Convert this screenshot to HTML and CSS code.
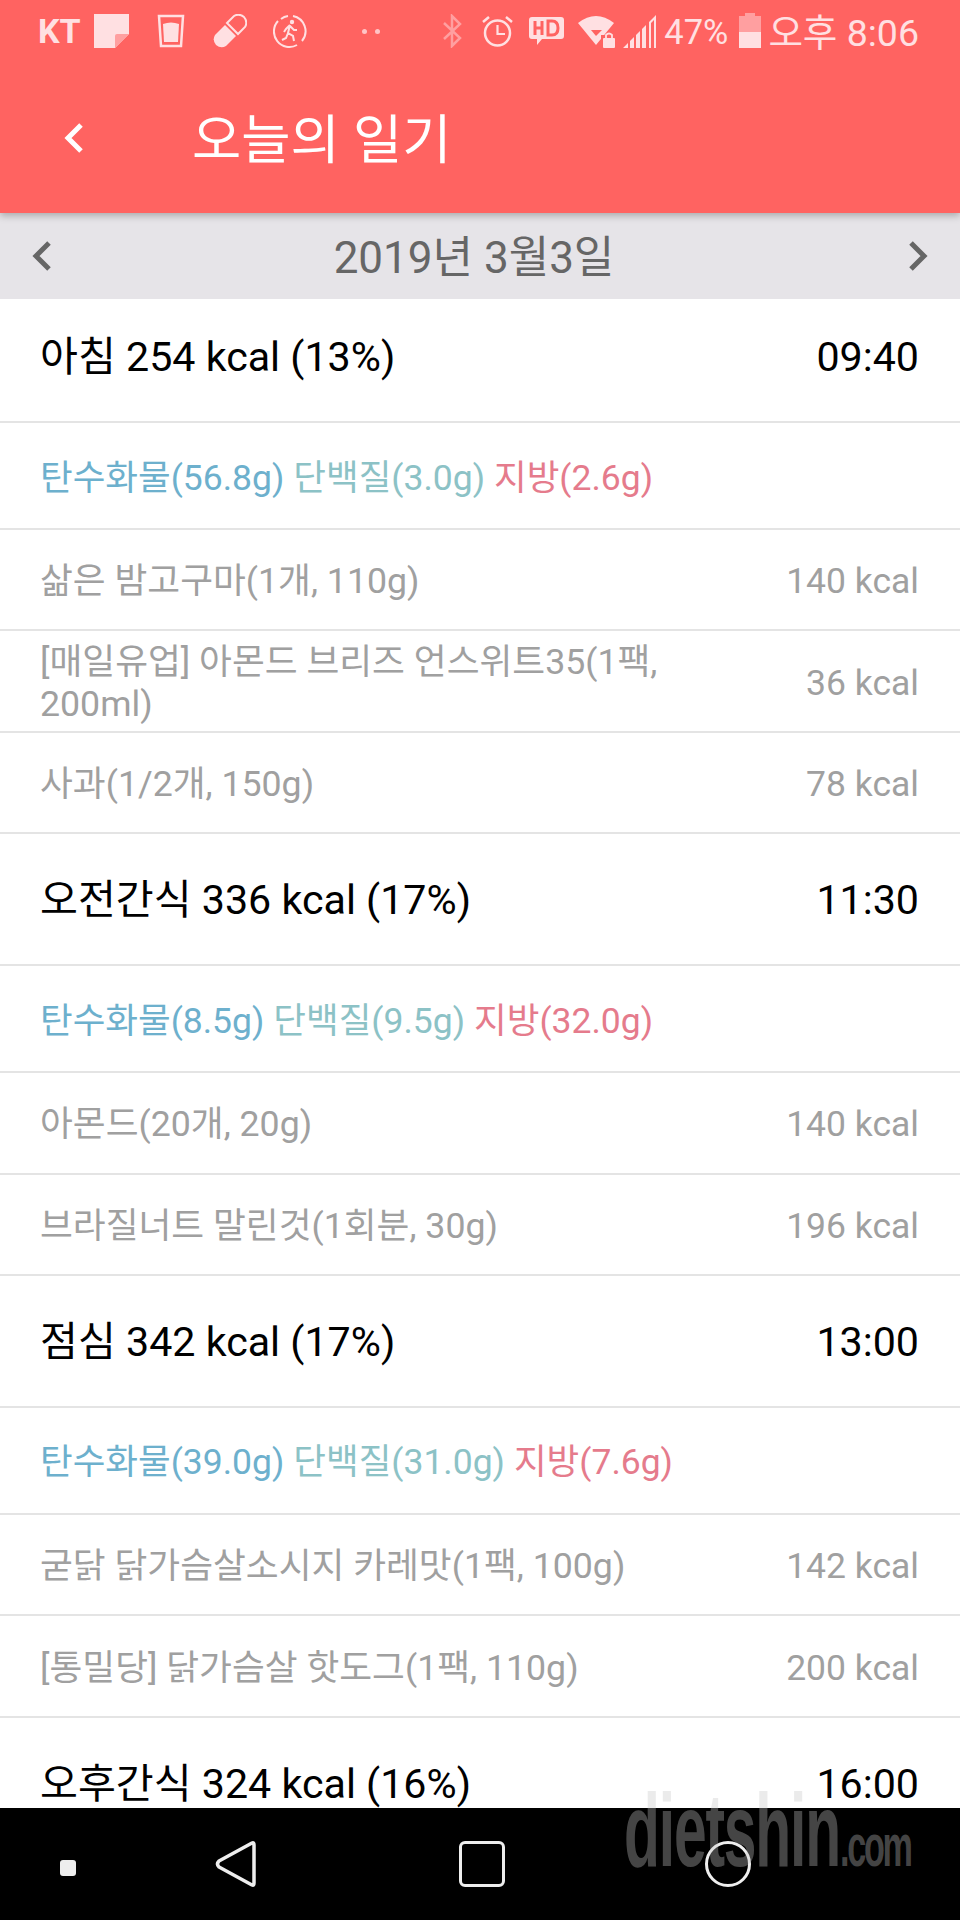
FILE: index.html
```html
<!DOCTYPE html>
<html lang="ko">
<head>
    <meta charset="UTF-8">
    <meta name="viewport" content="width=device-width, initial-scale=1.0">
    <title>오늘의 일기</title>
    <link rel="stylesheet" href="styles.css">
</head>
<body>
<div class="phone">

    <!-- Header with status bar -->
    <div class="header">
        <div class="status-bar">
            <div class="status-left">
                <span class="carrier">KT</span>
                <svg class="st-icon" width="35" height="34" viewBox="0 0 35 34"><path d="M0 0H35V20L21 34H0Z" fill="#ffe0e2"/><path d="M21 34V22Q21 20 23 20H35Z" fill="#ff9fa0"/></svg>
                <svg class="st-icon gap-glass" width="28" height="34" viewBox="0 0 28 34"><path d="M2 2H26L24 32H4Z" fill="none" stroke="#ffe0e2" stroke-width="2.5"/><path d="M6 10Q14 7 22 10L21 28H7Z" fill="#ffe0e2"/></svg>
                <svg class="st-icon gap-pill" width="34" height="34" viewBox="0 0 34 34"><path d="M12 11L23 22L13 32Q8 35 3 31Q-1 26 2 21Z" fill="#ffe0e2"/><path d="M14 9L21 2Q26 -1 31 3Q35 8 32 13L25 20Z" fill="none" stroke="#ffe0e2" stroke-width="2"/></svg>
                <svg class="st-icon gap-run" width="34" height="34" viewBox="0 0 34 34"><path d="M20 2A15.500 15.500 0 0 1 29 27M24 31A15.500 15.500 0 0 1 5 7M8 5A15.500 15.500 0 0 1 15 2" fill="none" stroke="#ffe0e2" stroke-width="2"/><circle cx="19" cy="8" r="2.200" fill="#ffe0e2"/><path d="M17 11L13 15L11 18M17 11L15 19L20 22L21 27M15 19L13 24L9 26M17 12L21 16L24 16" fill="none" stroke="#ffe0e2" stroke-width="2"/></svg>
                <span class="dots"><i></i><i></i></span>
            </div>
            <div class="status-right">
                <svg class="st-icon bt" width="20" height="34" viewBox="0 0 20 34"><path d="M2 9L18 24L10 32V2L18 10L2 25" fill="none" stroke="#ff9fa0" stroke-width="2.500"/></svg>
                <svg class="st-icon" width="31" height="33" viewBox="0 0 31 33"><circle cx="15.500" cy="18" r="12.500" fill="none" stroke="#ffe0e2" stroke-width="2.500"/><path d="M15.500 10V19H23" fill="none" stroke="#ffe0e2" stroke-width="2.200"/><path d="M1 7L7 2M30 7L24 2" stroke="#ffe0e2" stroke-width="2.500"/></svg>
                <svg class="st-icon hd" width="35" height="28" viewBox="0 0 35 28"><path d="M3 0H32Q35 0 35 3V19Q35 22 32 22H13L8 28V22H3Q0 22 0 19V3Q0 0 3 0Z" fill="#ffe0e2"/><path d="M6 4V18M13 4V18M6 11H13M19 4V18H23Q29 18 29 11T23 4Z" fill="none" stroke="#ff6361" stroke-width="3"/></svg>
                <svg class="st-icon wifi" width="37" height="33" viewBox="0 0 37 33"><path d="M0 8Q18 -6 36 8L18 30Z" fill="#ffe0e2"/><path d="M13 15H24L18 21Z" fill="#ff6361"/><rect x="23" y="20" width="14" height="13" fill="#ff6361"/><rect x="25" y="23" width="12" height="10" rx="1" fill="#ffe0e2"/><path d="M28 23V20Q31 17 34 20V23" fill="none" stroke="#ffe0e2" stroke-width="1.800"/></svg>
                <svg class="st-icon" width="33" height="33" viewBox="0 0 33 33"><path d="M0 33L5 28V33ZM7 26L11 22V33H7ZM13 20L17 16V33H13ZM19 14L23 10V33H19ZM26 7L33 0V33H31V5L28 8V33H26Z" fill="#ffe0e2"/></svg>
                <span class="battery-pct">47%</span>
                <div class="battery"><div class="battery-cap"></div><div class="battery-fill"></div></div>
                <span class="clock">오후 8:06</span>
            </div>
        </div>
        <div class="title-bar">
            <svg class="back" width="22" height="32" viewBox="0 0 22 32"><path d="M18 3L5 16L18 29" fill="none" stroke="#fff" stroke-width="5"/></svg>
            <h1>오늘의 일기</h1>
        </div>
    </div>

    <!-- Date selector -->
    <div class="date-bar">
        <svg width="22" height="32" viewBox="0 0 22 32"><path d="M18 3L5 16L18 29" fill="none" stroke="#666" stroke-width="5"/></svg>
        <span class="date-text">2019년 3월3일</span>
        <svg width="22" height="32" viewBox="0 0 22 32"><path d="M4 3L17 16L4 29" fill="none" stroke="#666" stroke-width="5"/></svg>
    </div>

    <!-- Diary list -->
    <div class="diary">
        <div class="meal first"><span>아침 254 kcal (13%)</span><span>09:40</span></div>
        <div class="macros"><span class="carb">탄수화물(56.8g)</span> <span class="protein">단백질(3.0g)</span> <span class="fat">지방(2.6g)</span></div>
        <div class="food"><span>삶은 밤고구마(1개, 110g)</span><span class="kcal">140 kcal</span></div>
        <div class="food"><span class="food-name">[매일유업] 아몬드 브리즈 언스위트35(1팩, 200ml)</span><span class="kcal">36 kcal</span></div>
        <div class="food"><span>사과(1/2개, 150g)</span><span class="kcal">78 kcal</span></div>

        <div class="meal"><span>오전간식 336 kcal (17%)</span><span>11:30</span></div>
        <div class="macros"><span class="carb">탄수화물(8.5g)</span> <span class="protein">단백질(9.5g)</span> <span class="fat">지방(32.0g)</span></div>
        <div class="food"><span>아몬드(20개, 20g)</span><span class="kcal">140 kcal</span></div>
        <div class="food"><span>브라질너트 말린것(1회분, 30g)</span><span class="kcal">196 kcal</span></div>

        <div class="meal"><span>점심 342 kcal (17%)</span><span>13:00</span></div>
        <div class="macros"><span class="carb">탄수화물(39.0g)</span> <span class="protein">단백질(31.0g)</span> <span class="fat">지방(7.6g)</span></div>
        <div class="food"><span>굳닭 닭가슴살소시지 카레맛(1팩, 100g)</span><span class="kcal">142 kcal</span></div>
        <div class="food"><span>[통밀당] 닭가슴살 핫도그(1팩, 110g)</span><span class="kcal">200 kcal</span></div>

        <div class="meal"><span>오후간식 324 kcal (16%)</span><span>16:00</span></div>
    </div>

    <!-- Android nav bar -->
    <div class="nav-bar">
        <div class="nav-dot"></div>
        <svg width="44" height="48" viewBox="0 0 44 48"><path d="M38 3Q40 2 40 5V43Q40 46 38 45L5 27Q2 24 5 21Z" fill="none" stroke="#eee" stroke-width="3.500" stroke-linejoin="round"/></svg>
        <div class="nav-square"></div>
        <div class="nav-circle"></div>
    </div>

    <div class="watermark">dietshin<small>.com</small></div>
</div>
</body>
</html>
```

FILE: styles.css
```css
* {
    margin: 0;
    padding: 0;
    box-sizing: border-box;
}

body {
    font-family: Roboto, "Noto Sans CJK KR", sans-serif;
    background: #fff;
}

.phone {
    position: relative;
    display: flex;
    flex-direction: column;
    width: 960px;
    height: 1920px;
    overflow: hidden;
}

/* Header */
.header {
    position: relative;
    z-index: 1;
    height: 213px;
    background-color: #ff6361;
    box-shadow: 0 3px 7px rgba(0, 0, 0, 0.25);
}

.status-bar {
    display: flex;
    justify-content: space-between;
    align-items: center;
    height: 62px;
    padding: 0 41px 0 38px;
    color: #ffe0e2;
}

.status-left,
.status-right {
    display: flex;
    align-items: center;
}

.status-right {
    gap: 8px;
}

.carrier {
    font-size: 34px;
    font-weight: 700;
    margin-right: 13px;
}

.gap-glass { margin-left: 28px; }
.gap-pill { margin-left: 28px; }
.gap-run { margin-left: 26px; }

.dots {
    display: flex;
    gap: 8px;
    margin-left: 55px;
}

.dots i {
    width: 5px;
    height: 5px;
    border-radius: 50%;
    background: #ffc4c6;
}

.bt { margin-right: 12px; }
.hd { margin-left: 8px; }
.wifi { margin-left: 6px; }

.battery-pct {
    font-size: 34.500px;
    margin-top: 1px;
}

.battery {
    position: relative;
    width: 22px;
    height: 32px;
    margin: 1px -1px 0 3px;
    background: #ff9fa0;
}

.battery-cap {
    position: absolute;
    top: -3px;
    left: 6px;
    width: 10px;
    height: 3px;
    background: #ff9fa0;
}

.battery-fill {
    position: absolute;
    left: 0;
    right: 0;
    bottom: 0;
    height: 47%;
    background: #ffe0e2;
}

.clock {
    font-size: 37.500px;
    margin-bottom: 3px;
}

.title-bar {
    display: flex;
    align-items: center;
    height: 151px;
    padding-left: 63px;
    color: #fff;
}

.title-bar h1 {
    font-size: 53.500px;
    font-weight: 400;
    margin: 0 0 4px 107px;
}

/* Date */
.date-bar {
    display: flex;
    justify-content: space-between;
    align-items: center;
    height: 86px;
    padding: 0 31px;
    background-color: #e6e4e8;
    color: #666;
}

.date-text {
    font-size: 44px;
    margin: 0 12px 5px 0;
}

/* Rows */
.diary {
    flex: 1;
    overflow: hidden;
}

.meal {
    display: flex;
    justify-content: space-between;
    align-items: center;
    height: 132px;
    padding: 2px 41px 0 40px;
    font-size: 41.200px;
    line-height: 50px;
    color: #000;
    border-bottom: 2px solid #e4e4e4;
}

.meal.first {
    height: 124px;
    padding: 0 41px 6px 40px;
}

.macros {
    display: flex;
    align-items: center;
    gap: 9px;
    height: 107px;
    padding: 4px 40px 0;
    font-size: 35.500px;
    line-height: 44px;
    border-bottom: 2px solid #e4e4e4;
}

.carb { color: #6db0cd; }
.protein { color: #8cc2c6; }
.fat { color: #e57b8c; }

.food {
    display: flex;
    justify-content: space-between;
    align-items: center;
    height: 101.400px;
    padding: 3px 41px 0 40px;
    font-size: 35.700px;
    line-height: 42px;
    color: #a0a0a0;
    border-bottom: 2px solid #e4e4e4;
}

.food-name {
    width: 640px;
}

.kcal {
    font-size: 35.500px;
    white-space: nowrap;
}

/* Nav bar */
.nav-bar {
    position: relative;
    z-index: 3;
    display: flex;
    align-items: center;
    height: 112px;
    background-color: #000;
}

.nav-dot {
    width: 16px;
    height: 16px;
    margin: 8px 0 0 60px;
    border-radius: 3px;
    background: #eee;
}

.nav-bar svg {
    margin: 0 0 0 138px;
}

.nav-square {
    width: 46px;
    height: 46px;
    margin-left: 201px;
    border: 3.500px solid #eee;
    border-radius: 6px;
}

.nav-circle {
    position: relative;
    z-index: 5;
    width: 46px;
    height: 46px;
    margin-left: 200px;
    border: 3.500px solid #eee;
    border-radius: 50%;
}

.watermark {
    position: absolute;
    z-index: 4;
    left: 624px;
    top: 1776px;
    font-family: "Liberation Sans", sans-serif;
    font-size: 103px;
    font-weight: 700;
    line-height: 110px;
    letter-spacing: -2px;
    color: rgba(198, 198, 198, 0.35);
    transform: scaleX(0.57);
    transform-origin: left top;
    white-space: nowrap;
}

.watermark small {
    font-size: 60px;
    letter-spacing: -4px;
}
```
